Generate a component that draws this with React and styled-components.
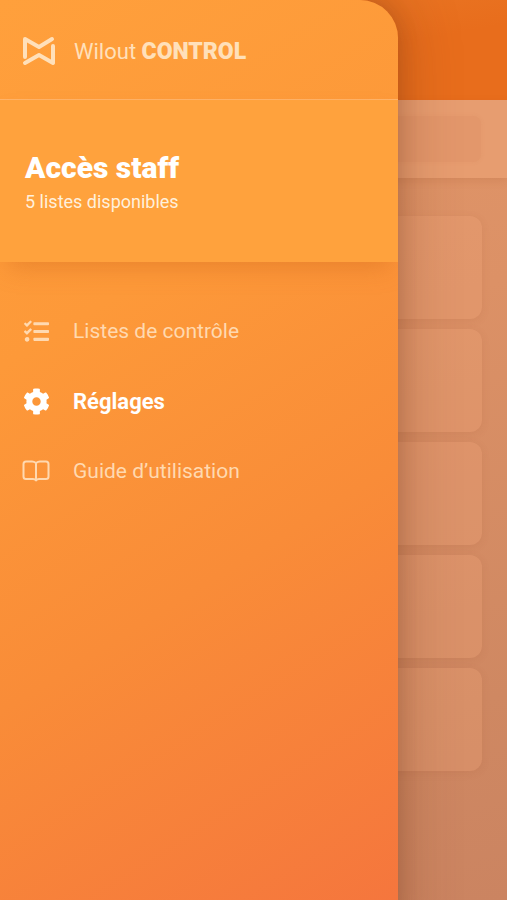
import React from "react";
import styled, { createGlobalStyle } from "styled-components";
import { FaCog, FaTasks } from "react-icons/fa";

const GlobalStyle = createGlobalStyle`
  *, *::before, *::after { box-sizing: border-box; }
  body {
    margin: 0;
    font-family: Roboto, "Liberation Sans", sans-serif;
  }
`;

const Screen = styled.div`
  display: grid;
  grid-template-columns: minmax(0, 1fr);
  min-height: 100vh;
  overflow: hidden;
  & > * { grid-area: 1 / 1; }
`;

const Page = styled.main`
  display: flex;
  flex-direction: column;
  background: linear-gradient(165deg, #e09568 15%, #dc9166 40%, #cf8862 80%, #cb8461 100%);
`;

const PageHeader = styled.div`
  height: 100px;
  background: linear-gradient(170deg, #ea7725 20%, #e86d1c 60%);
`;

const SearchBar = styled.div`
  padding: 16px 26px;
  background: #e79d70;
  box-shadow: 0 3px 8px rgba(160, 80, 40, 0.16);
`;

const SearchField = styled.div`
  height: 46px;
  border-radius: 8px;
  background: rgba(205, 120, 80, 0.14);
  box-shadow: 0 0 4px rgba(205, 120, 80, 0.12);
`;

const Cards = styled.div`
  display: grid;
  gap: 10px;
  padding: 38px 25px;
`;

const Card = styled.div`
  height: 103px;
  border-radius: 12px;
  background: rgba(240, 165, 122, 0.28);
  box-shadow: 0 2px 8px rgba(150, 70, 35, 0.1);
`;

const Drawer = styled.aside`
  z-index: 1;
  display: flex;
  flex-direction: column;
  width: 78.5%;
  overflow: hidden;
  border-top-right-radius: 38px;
  color: #fff;
  background: linear-gradient(148deg, #ffa03c 0%, #fd9939 32%, #f98c38 62%, #f5763d 100%);
`;

const DrawerShadow = styled.div`
  width: 78.5%;
  margin-bottom: -60px;
  border-top-right-radius: 38px;
  box-shadow: 0 0 60px rgba(105, 50, 20, 0.35), 0 0 20px rgba(105, 50, 20, 0.2);
`;

const Brand = styled.header`
  display: flex;
  align-items: center;
  gap: 18px;
  height: 100px;
  padding: 3px 22px 0;
  border-bottom: 1px solid #ffb469;
  color: #ffe0ba;
  font-size: 22px;
`;

const Strong = styled.strong`
  font-size: 23px;
  font-weight: 900;
`;

const Account = styled.section`
  display: flex;
  flex-direction: column;
  justify-content: center;
  height: 162px;
  padding: 6px 25px 0;
  background: #ffa23d;
  box-shadow: 0 12px 24px -8px rgba(200, 95, 25, 0.4);
`;

const Title = styled.h1`
  margin: 0;
  font-size: 30px;
  line-height: 36px;
  font-weight: 900;
`;

const Subtitle = styled.p`
  margin: 0;
  color: #fff0dc;
  font-size: 18px;
  line-height: 32px;
`;

const Menu = styled.nav`
  display: grid;
  gap: 22px;
  padding: 45px 22px;
`;

const MenuLink = styled.a`
  display: grid;
  grid-template-columns: 28px 1fr;
  align-items: center;
  gap: 23px;
  height: 48px;
  color: ${({ $active }) => ($active ? "#fff" : "#ffd9b0")};
  font-size: ${({ $active }) => ($active ? "22px" : "21px")};
  font-weight: ${({ $active }) => ($active ? 700 : 400)};
  text-decoration: none;
  & > svg { justify-self: center; }
`;

const Logo = () => (
  <svg width="34" height="30" viewBox="0 0 34 30" fill="none" stroke="currentColor" strokeWidth="4" strokeLinejoin="round" strokeLinecap="round" aria-hidden="true">
    <path d="M3 21V3L17 11L30 3" />
    <path d="M3 27L17 19L31 27V10" />
  </svg>
);

const BookIcon = () => (
  <svg width="28" height="24" viewBox="0 0 28 24" fill="none" stroke="currentColor" strokeWidth="2" strokeLinejoin="round" strokeLinecap="round" aria-hidden="true">
    <path d="M14 4Q12 2.500 10 2.500H4Q1.500 2.500 1.500 5V17.500Q1.500 20 4 20H11Q13 20 14 21.500Q15 20 17 20H24Q26.500 20 26.500 17.500V5Q26.500 2.500 24 2.500H18Q16 2.500 14 4V21" />
  </svg>
);

const items = [
  { label: "Listes de contrôle", icon: <FaTasks size={25} /> },
  { label: "Réglages", icon: <FaCog size={27} />, active: true },
  { label: "Guide d’utilisation", icon: <BookIcon /> },
];

export default function App() {
  return (
    <Screen>
      <GlobalStyle />
      <Page>
        <PageHeader />
        <SearchBar><SearchField /></SearchBar>
        <Cards>
          {[1, 2, 3, 4, 5].map((id) => <Card key={id} />)}
        </Cards>
      </Page>
      <DrawerShadow />
      <Drawer>
        <Brand>
          <Logo />
          <span>Wilout <Strong>CONTROL</Strong></span>
        </Brand>
        <Account>
          <Title>Accès staff</Title>
          <Subtitle>5 listes disponibles</Subtitle>
        </Account>
        <Menu>
          {items.map(({ label, icon, active }) => (
            <MenuLink key={label} href="#" $active={active} aria-current={active ? "page" : undefined}>
              {icon}
              <span>{label}</span>
            </MenuLink>
          ))}
        </Menu>
      </Drawer>
    </Screen>
  );
}
